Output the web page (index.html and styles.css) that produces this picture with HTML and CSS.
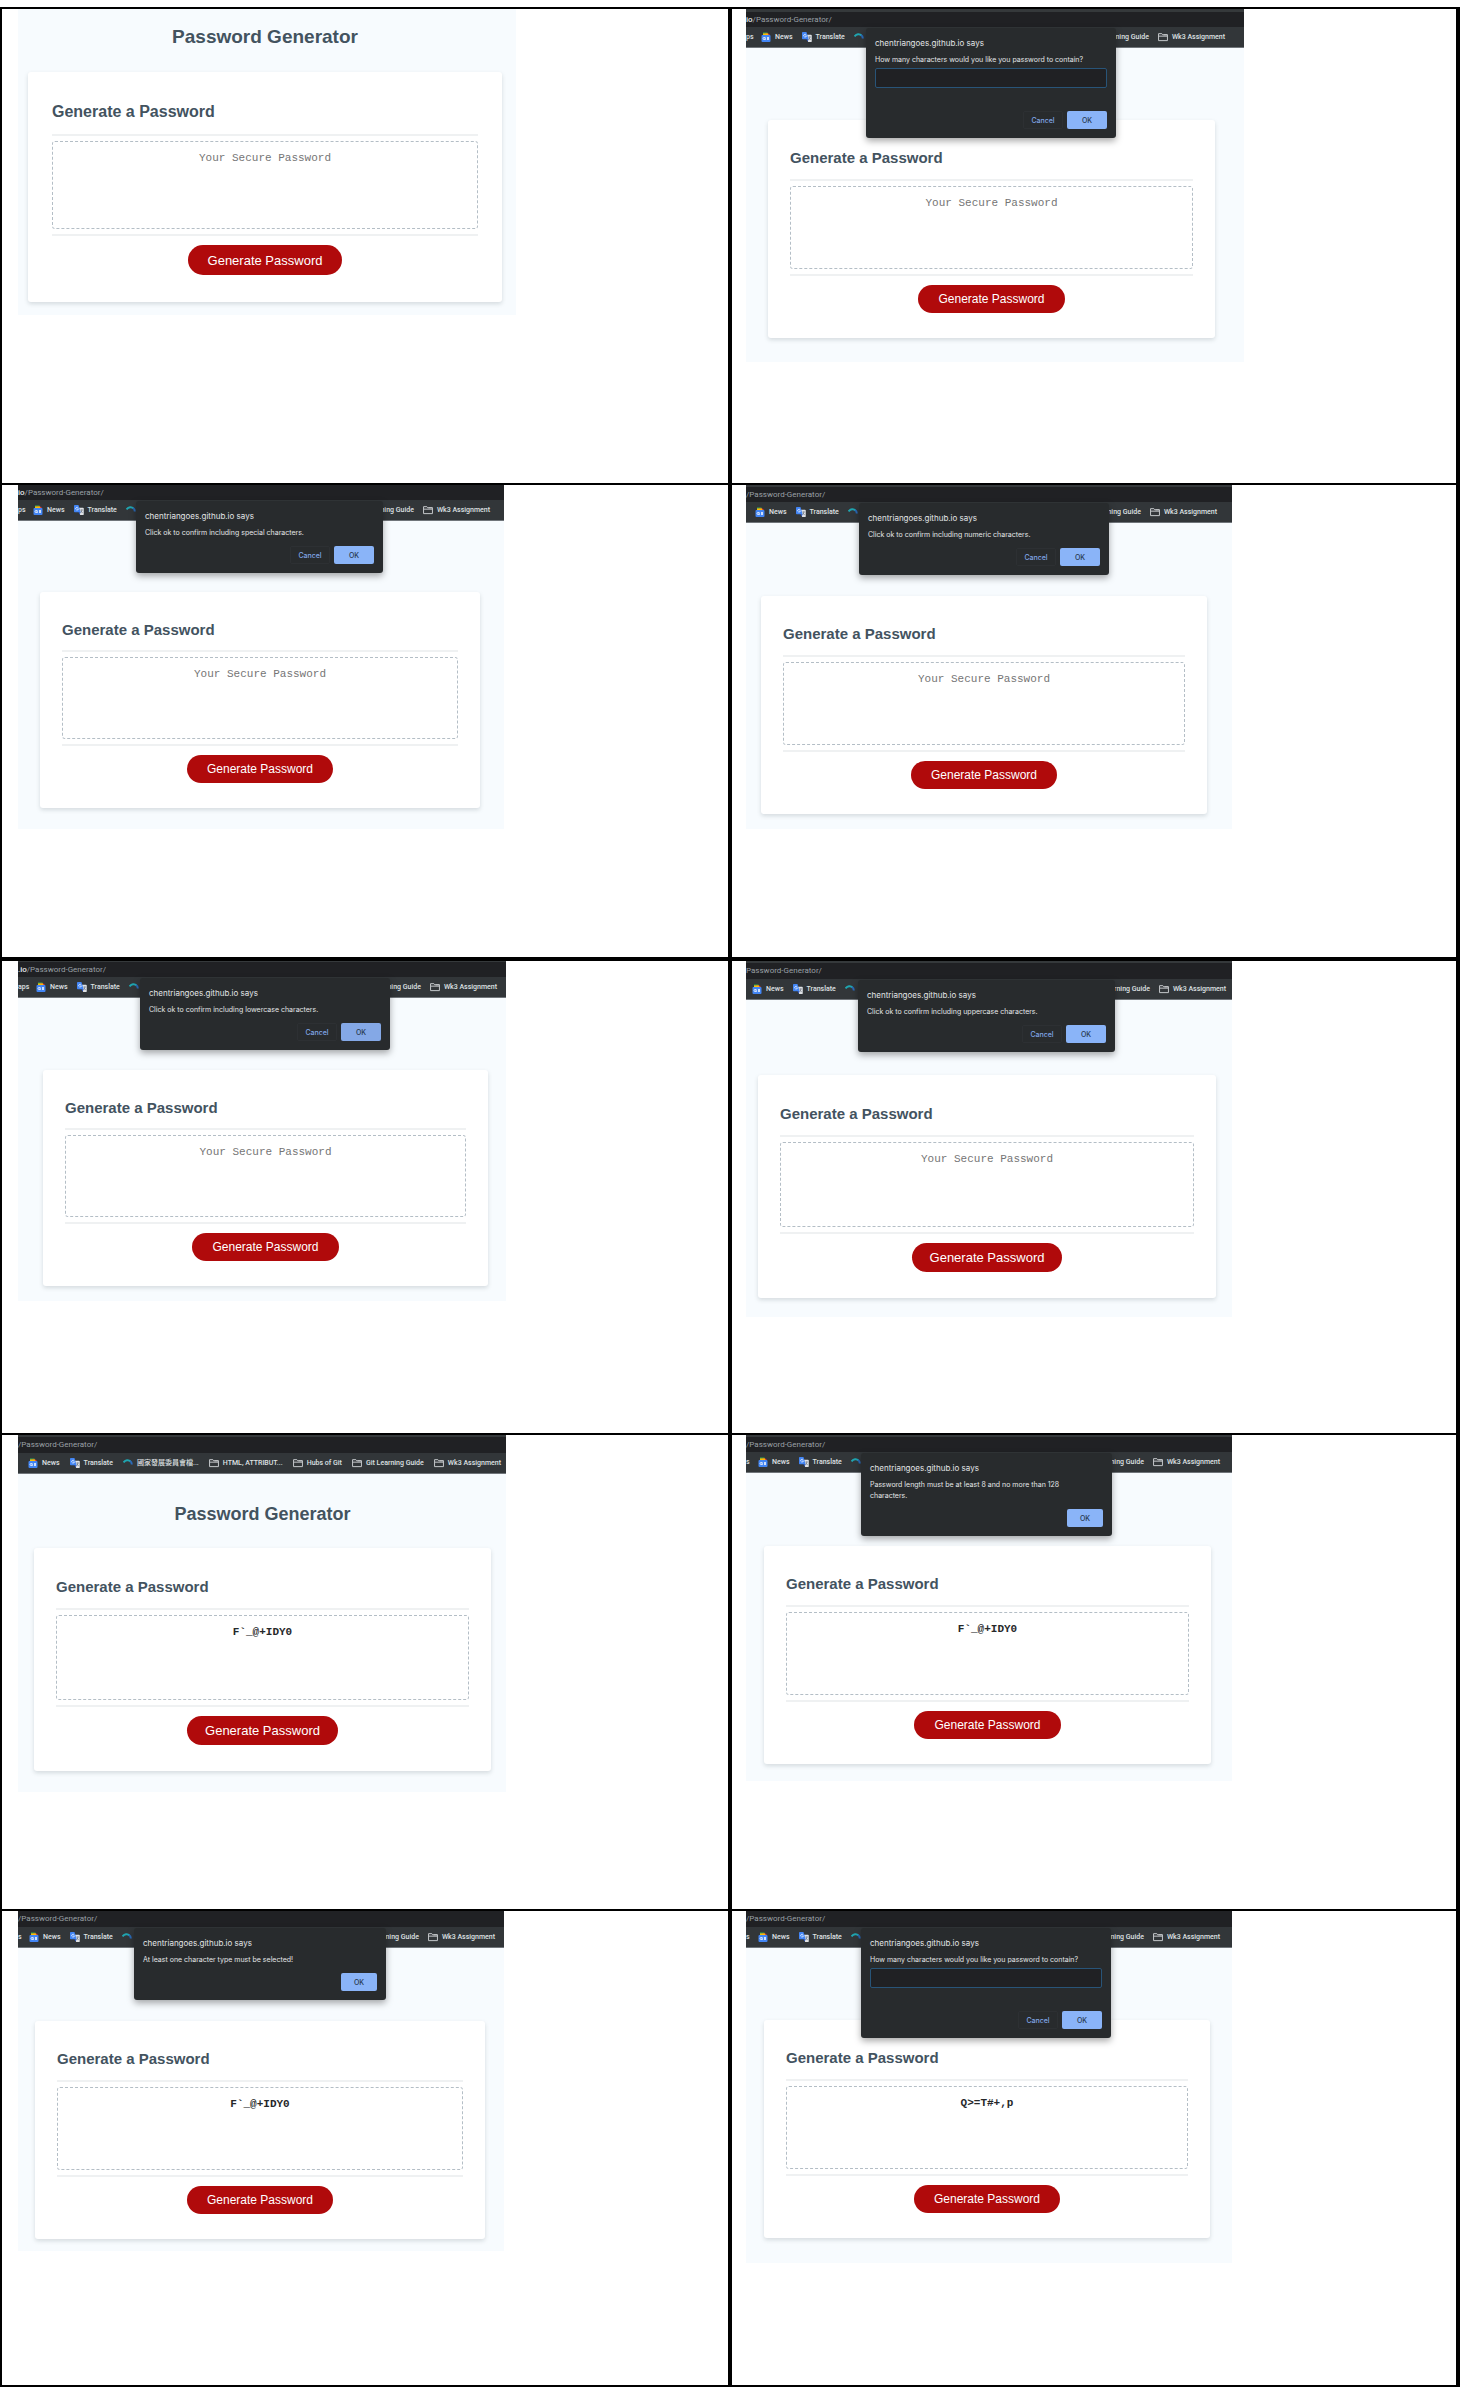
FILE: index.html
```html
<!DOCTYPE html>
<html lang="en">
<head>
<meta charset="utf-8">
<title>Password Generator</title>
<link rel="stylesheet" href="styles.css">
</head>
<body>
<svg class="sprite" aria-hidden="true">
  <symbol id="news" viewBox="0 0 18 20">
    <path fill="#34a853" d="M3 1h9v6H3z"/><path fill="#ea4335" d="M8 2l8 2-1 5H7z"/><path fill="#fbbc04" d="M3 3h10v5H3z"/>
    <rect y="6" width="18" height="14" rx="2" fill="#4285f4"/>
    <path fill="none" stroke="#fff" stroke-width="1.5" d="M8 11H5a2 2 0 0 0 0 4h3v-2H6M11 11h4M11 13h4M11 15h4"/>
  </symbol>
  <symbol id="translate" viewBox="0 0 18 18">
    <path fill="#e0e3e6" d="M8 5h8a1.500 1.500 0 0 1 1.500 1.500v10A1.500 1.500 0 0 1 16 18h-5z"/>
    <path fill="#4285f4" d="M1.500 0H8l4 13H1.500A1.500 1.500 0 0 1 0 11.500v-10A1.500 1.500 0 0 1 1.500 0z"/>
    <path fill="#2a56c6" d="M8 13h4l-2 4z"/>
    <path fill="none" stroke="#fff" stroke-width="1.200" d="M7.500 5a2.500 2.500 0 1 0 .5 2H6"/>
    <path fill="none" stroke="#6b7280" stroke-width="1.200" d="M11.500 9H16M14 8v1c0 2-1 4-2 5M12.500 10.500l3 4"/>
  </symbol>
  <symbol id="swirl" viewBox="0 0 20 18">
    <path fill="none" stroke="#1fa5b0" stroke-width="4" d="M1 8c4-5 10-6 14-2"/>
    <path fill="none" stroke="#2a6ab8" stroke-width="4" d="M14 5c3 2 4 4 3 7"/>
  </symbol>
  <symbol id="folder" viewBox="0 0 18 18">
    <path fill="none" stroke="#c3c6c9" stroke-width="1.800" d="M1 15.500V3h6l1.500 2H17v10.500zM1 7.500h16M10 5h7"/>
  </symbol>
</svg>

<main class="sheet">

  <section class="cell row-1">
    <div class="shot shot-1">
      <div class="page">
        <h1 class="title">Password Generator</h1>
        <div class="card card-xl">
          <h2 class="card-title">Generate a Password</h2>
          <textarea class="field" aria-label="Password" placeholder="Your Secure Password" readonly></textarea>
          <div class="card-foot"><button class="generate">Generate Password</button></div>
        </div>
      </div>
    </div>
  </section>

  <section class="cell row-1">
    <div class="shot shot-2">
      <div class="url"><b>io</b>/Password-Generator/</div>
      <nav class="marks">
        <span class="lead">ps</span>
        <a href="#"><svg><use href="#news"/></svg>News</a>
        <a href="#"><svg><use href="#translate"/></svg>Translate</a>
        <a href="#" aria-label="Council"><svg><use href="#swirl"/></svg></a>
        <a class="far" href="#"><svg><use href="#folder"/></svg>Git Learning Guide</a>
        <a href="#"><svg><use href="#folder"/></svg>Wk3 Assignment</a>
      </nav>
      <div class="page">
        <div class="dialog" role="dialog">
          <p class="origin">chentriangoes.github.io says</p>
          <label class="message" for="count-1">How many characters would you like you password to contain?</label>
          <input class="prompt" id="count-1" type="text">
          <div class="actions"><button class="cancel">Cancel</button><button class="ok">OK</button></div>
        </div>
        <div class="card">
          <h2 class="card-title">Generate a Password</h2>
          <textarea class="field" aria-label="Password" placeholder="Your Secure Password" readonly></textarea>
          <div class="card-foot"><button class="generate">Generate Password</button></div>
        </div>
      </div>
    </div>
  </section>

  <section class="cell row-2">
    <div class="shot shot-3">
      <div class="url"><b>io</b>/Password-Generator/</div>
      <nav class="marks">
        <span class="lead">ps</span>
        <a href="#"><svg><use href="#news"/></svg>News</a>
        <a href="#"><svg><use href="#translate"/></svg>Translate</a>
        <a href="#" aria-label="Council"><svg><use href="#swirl"/></svg></a>
        <a class="far" href="#"><svg><use href="#folder"/></svg>Git Learning Guide</a>
        <a href="#"><svg><use href="#folder"/></svg>Wk3 Assignment</a>
      </nav>
      <div class="page">
        <div class="dialog" role="dialog">
          <p class="origin">chentriangoes.github.io says</p>
          <p class="message">Click ok to confirm including special characters.</p>
          <div class="actions"><button class="cancel">Cancel</button><button class="ok">OK</button></div>
        </div>
        <div class="card card-sm">
          <h2 class="card-title">Generate a Password</h2>
          <textarea class="field" aria-label="Password" placeholder="Your Secure Password" readonly></textarea>
          <div class="card-foot"><button class="generate">Generate Password</button></div>
        </div>
      </div>
    </div>
  </section>

  <section class="cell row-2">
    <div class="shot shot-4">
      <div class="url">/Password-Generator/</div>
      <nav class="marks">
        <span class="lead"></span>
        <a href="#"><svg><use href="#news"/></svg>News</a>
        <a href="#"><svg><use href="#translate"/></svg>Translate</a>
        <a href="#" aria-label="Council"><svg><use href="#swirl"/></svg></a>
        <a class="far" href="#"><svg><use href="#folder"/></svg>Git Learning Guide</a>
        <a href="#"><svg><use href="#folder"/></svg>Wk3 Assignment</a>
      </nav>
      <div class="page">
        <div class="dialog" role="dialog">
          <p class="origin">chentriangoes.github.io says</p>
          <p class="message">Click ok to confirm including numeric characters.</p>
          <div class="actions"><button class="cancel">Cancel</button><button class="ok">OK</button></div>
        </div>
        <div class="card">
          <h2 class="card-title">Generate a Password</h2>
          <textarea class="field" aria-label="Password" placeholder="Your Secure Password" readonly></textarea>
          <div class="card-foot"><button class="generate">Generate Password</button></div>
        </div>
      </div>
    </div>
  </section>

  <section class="cell row-3">
    <div class="shot shot-5">
      <div class="url"><b>.io</b>/Password-Generator/</div>
      <nav class="marks">
        <span class="lead">aps</span>
        <a href="#"><svg><use href="#news"/></svg>News</a>
        <a href="#"><svg><use href="#translate"/></svg>Translate</a>
        <a href="#" aria-label="Council"><svg><use href="#swirl"/></svg></a>
        <a class="far" href="#"><svg><use href="#folder"/></svg>Git Learning Guide</a>
        <a href="#"><svg><use href="#folder"/></svg>Wk3 Assignment</a>
      </nav>
      <div class="page">
        <div class="dialog" role="dialog">
          <p class="origin">chentriangoes.github.io says</p>
          <p class="message">Click ok to confirm including lowercase characters.</p>
          <div class="actions"><button class="cancel">Cancel</button><button class="ok ok-pressed">OK</button></div>
        </div>
        <div class="card card-sm">
          <h2 class="card-title">Generate a Password</h2>
          <textarea class="field" aria-label="Password" placeholder="Your Secure Password" readonly></textarea>
          <div class="card-foot"><button class="generate">Generate Password</button></div>
        </div>
      </div>
    </div>
  </section>

  <section class="cell row-3">
    <div class="shot shot-6">
      <div class="url">Password-Generator/</div>
      <nav class="marks">
        <span class="lead"></span>
        <a href="#"><svg><use href="#news"/></svg>News</a>
        <a href="#"><svg><use href="#translate"/></svg>Translate</a>
        <a href="#" aria-label="Council"><svg><use href="#swirl"/></svg></a>
        <a class="far" href="#"><svg><use href="#folder"/></svg>Git Learning Guide</a>
        <a href="#"><svg><use href="#folder"/></svg>Wk3 Assignment</a>
      </nav>
      <div class="page">
        <div class="dialog" role="dialog">
          <p class="origin">chentriangoes.github.io says</p>
          <p class="message">Click ok to confirm including uppercase characters.</p>
          <div class="actions"><button class="cancel">Cancel</button><button class="ok">OK</button></div>
        </div>
        <div class="card card-lg">
          <h2 class="card-title">Generate a Password</h2>
          <textarea class="field" aria-label="Password" placeholder="Your Secure Password" readonly></textarea>
          <div class="card-foot"><button class="generate">Generate Password</button></div>
        </div>
      </div>
    </div>
  </section>

  <section class="cell row-4">
    <div class="shot shot-7">
      <div class="url">/Password-Generator/</div>
      <nav class="marks marks-full">
        <span class="lead"></span>
        <a href="#"><svg><use href="#news"/></svg>News</a>
        <a href="#"><svg><use href="#translate"/></svg>Translate</a>
        <a href="#"><svg><use href="#swirl"/></svg>國家發展委員會檔...</a>
        <a href="#"><svg><use href="#folder"/></svg>HTML, ATTRIBUT...</a>
        <a href="#"><svg><use href="#folder"/></svg>Hubs of Git</a>
        <a href="#"><svg><use href="#folder"/></svg>Git Learning Guide</a>
        <a href="#"><svg><use href="#folder"/></svg>Wk3 Assignment</a>
      </nav>
      <div class="page">
        <h1 class="title">Password Generator</h1>
        <div class="card card-lg">
          <h2 class="card-title">Generate a Password</h2>
          <textarea class="field" aria-label="Password" readonly>F`_@+IDY0</textarea>
          <div class="card-foot"><button class="generate">Generate Password</button></div>
        </div>
      </div>
    </div>
  </section>

  <section class="cell row-4">
    <div class="shot shot-8">
      <div class="url">/Password-Generator/</div>
      <nav class="marks">
        <span class="lead">s</span>
        <a href="#"><svg><use href="#news"/></svg>News</a>
        <a href="#"><svg><use href="#translate"/></svg>Translate</a>
        <a href="#" aria-label="Council"><svg><use href="#swirl"/></svg></a>
        <a class="far" href="#"><svg><use href="#folder"/></svg>Git Learning Guide</a>
        <a href="#"><svg><use href="#folder"/></svg>Wk3 Assignment</a>
      </nav>
      <div class="page">
        <div class="dialog dialog-alert" role="dialog">
          <p class="origin">chentriangoes.github.io says</p>
          <p class="message">Password length must be at least 8 and no more than 128 characters.</p>
          <div class="actions"><button class="ok">OK</button></div>
        </div>
        <div class="card">
          <h2 class="card-title">Generate a Password</h2>
          <textarea class="field" aria-label="Password" readonly>F`_@+IDY0</textarea>
          <div class="card-foot"><button class="generate">Generate Password</button></div>
        </div>
      </div>
    </div>
  </section>

  <section class="cell row-5">
    <div class="shot shot-9">
      <div class="url">/Password-Generator/</div>
      <nav class="marks">
        <span class="lead">s</span>
        <a href="#"><svg><use href="#news"/></svg>News</a>
        <a href="#"><svg><use href="#translate"/></svg>Translate</a>
        <a href="#" aria-label="Council"><svg><use href="#swirl"/></svg></a>
        <a class="far" href="#"><svg><use href="#folder"/></svg>Git Learning Guide</a>
        <a href="#"><svg><use href="#folder"/></svg>Wk3 Assignment</a>
      </nav>
      <div class="page">
        <div class="dialog dialog-alert" role="dialog">
          <p class="origin">chentriangoes.github.io says</p>
          <p class="message">At least one character type must be selected!</p>
          <div class="actions"><button class="ok">OK</button></div>
        </div>
        <div class="card">
          <h2 class="card-title">Generate a Password</h2>
          <textarea class="field" aria-label="Password" readonly>F`_@+IDY0</textarea>
          <div class="card-foot"><button class="generate">Generate Password</button></div>
        </div>
      </div>
    </div>
  </section>

  <section class="cell row-5">
    <div class="shot shot-10">
      <div class="url">/Password-Generator/</div>
      <nav class="marks">
        <span class="lead">s</span>
        <a href="#"><svg><use href="#news"/></svg>News</a>
        <a href="#"><svg><use href="#translate"/></svg>Translate</a>
        <a href="#" aria-label="Council"><svg><use href="#swirl"/></svg></a>
        <a class="far" href="#"><svg><use href="#folder"/></svg>Git Learning Guide</a>
        <a href="#"><svg><use href="#folder"/></svg>Wk3 Assignment</a>
      </nav>
      <div class="page">
        <div class="dialog" role="dialog">
          <p class="origin">chentriangoes.github.io says</p>
          <label class="message" for="count-2">How many characters would you like you password to contain?</label>
          <input class="prompt" id="count-2" type="text">
          <div class="actions"><button class="cancel">Cancel</button><button class="ok">OK</button></div>
        </div>
        <div class="card">
          <h2 class="card-title">Generate a Password</h2>
          <textarea class="field" aria-label="Password" readonly>Q&gt;=T#+,p</textarea>
          <div class="card-foot"><button class="generate">Generate Password</button></div>
        </div>
      </div>
    </div>
  </section>

</main>
</body>
</html>
```
FILE: styles.css
```css
* { box-sizing: border-box; }

body {
  margin: 0;
  padding: 7px 6px 7px 0;
  background: #fff;
  font-family: "Liberation Sans", Arial, sans-serif;
}

p, h1, h2 { margin: 0; }

button { font: inherit; padding: 0; border: 0; }

.sprite { display: none; }

/* Sheet: two ruled columns of captures */
.sheet {
  display: grid;
  grid-template-columns: 1fr 1fr;
  border-bottom: 2px solid #000;
}

.cell {
  min-width: 0;
  min-height: 476px;
  padding-left: 16px;
  border: solid #000;
  border-width: 2px 2px 0;
}

.cell:nth-child(even) { padding-left: 14px; border-right-width: 4px; }
.row-2 { min-height: 474px; }
.row-3 { border-top-width: 4px; }

.shot {
  --strip: 0px;
  --bar: 15px;
  --lead: 12px;
  --trail: 12px;
  --page: 72px 22px 24px;
  --dialog: 250px;
  --dialog-x: 115px;
  width: 486px;
  max-width: 100%;
  overflow: hidden;
}

.shot-1 { --page: 15px 14px 13px 10px; width: 498px; }
.shot-2 { --strip: 3px; --lead: 15px; --trail: 19px; --page: 72px 29px 24px 22px; --dialog-x: 120px; width: 498px; }
.shot-3 { --lead: 15px; --trail: 14px; --page: 71px 24px 21px 22px; --dialog: 247px; --dialog-x: 118px; }
.shot-4 { --strip: 2px; --lead: 9px; --trail: 15px; --page: 73px 25px 15px 15px; --dialog-x: 113px; }
.shot-5 { --strip: 1px; --lead: 18px; --trail: 9px; --page: 72px 18px 15px 25px; --dialog-x: 122px; width: 488px; }
.shot-6 { --strip: 2px; --bar: 16px; --lead: 6px; --trail: 6px; --page: 75px 16px 19px 12px; --dialog: 257px; --dialog-x: 112px; }
.shot-7 { --strip: 2px; --bar: 16px; --lead: 9px; --trail: 5px; --page: 27px 15px 21px 16px; width: 488px; }
.shot-8 { --strip: 2px; --page: 73px 21px 17px 18px; --dialog: 251px; }
.shot-9 { --bar: 16px; --lead: 11px; --trail: 9px; --page: 73px 19px 12px 17px; --dialog: 252px; --dialog-x: 116px; }
.shot-10 { --bar: 16px; --page: 72px 22px 25px 18px; }

/* Browser chrome */
.url {
  height: calc(var(--bar) + var(--strip));
  border-top: var(--strip) solid #35393b;
  background: #202124;
  color: #9aa0a6;
  font: 8px/15px Roboto, sans-serif;
  white-space: nowrap;
}

.url b { color: #e8eaed; font-weight: 500; }

.marks {
  display: flex;
  align-items: center;
  gap: 9px;
  height: 21px;
  padding-right: var(--trail);
  border-bottom: 1px solid #70757a;
  background: #323639;
  color: #dfe1e3;
  font: 500 7px/12px Roboto, "Noto Sans CJK TC", sans-serif;
  white-space: nowrap;
}

.marks a {
  display: flex;
  flex: none;
  align-items: center;
  gap: 4px;
  color: inherit;
  text-decoration: none;
}

.marks svg { width: 10px; height: 10px; }
.marks .far { margin-left: auto; }
.lead { flex: none; width: var(--lead); margin-right: -9px; overflow: hidden; }
.marks-full { justify-content: space-between; gap: 0; }

/* Generator page */
.page {
  position: relative;
  padding: var(--page);
  background: #f7fbfe;
}

.title {
  padding-bottom: 21px;
  color: #43535f;
  font-size: 18px;
  line-height: 26px;
  text-align: center;
}

.shot-1 .title { padding-bottom: 22px; font-size: 19px; }

.card {
  --side: 22px;
  --above: 28px;
  --below: 11px;
  --field: 83px;
  --button: 28px;
  --end: 25px;
  padding: 0 var(--side) var(--end);
  border-radius: 3px;
  background: #fff;
  box-shadow: 0 2px 4px rgba(60, 75, 85, 0.18);
}

.card-sm { --below: 10px; --field: 82px; }
.card-lg { --above: 29px; --field: 85px; --button: 29px; --end: 26px; }
.card-xl { --side: 24px; --above: 30px; --below: 12px; --field: 88px; --button: 30px; --end: 27px; }

.card-title {
  padding: var(--above) 0 var(--below);
  border-bottom: 2px solid #eff1f2;
  color: #43535f;
  font-size: 15px;
  line-height: 20px;
}

.card-xl .card-title { font-size: 16px; }

.field {
  display: block;
  width: 100%;
  height: var(--field);
  margin: 5px 0;
  padding: 9px;
  border: 1px dashed #b4bec6;
  border-radius: 3px;
  outline: 0;
  background: #fff;
  color: #26282a;
  font: bold 11px/14px "Liberation Mono", monospace;
  text-align: center;
  resize: none;
  overflow: hidden;
}

.field::placeholder { color: #757575; font-weight: 400; opacity: 1; }

.card-foot {
  display: flex;
  justify-content: center;
  padding-top: 9px;
  border-top: 2px solid #eff1f2;
}

.generate {
  height: var(--button);
  padding: 0 20px;
  border-radius: 15px;
  background: #b00a0b;
  color: #fff;
  font-size: 12px;
}

.card-lg .generate { padding: 0 18px; font-size: 13px; }
.card-xl .generate { padding: 0 20px; font-size: 13px; }

/* Script dialog, hung from the address bar over the page */
.dialog {
  position: absolute;
  top: -20px;
  left: var(--dialog-x);
  width: var(--dialog);
  padding: 9px;
  border-radius: 3px;
  background: #282b2d;
  box-shadow: 0 3px 7px rgba(0, 0, 0, 0.35);
  color: #e3e5e7;
  font: 7px/11px Inter, sans-serif;
}

.origin { font-size: 8px; line-height: 12px; }
.message { display: block; padding: 5px 12px 0 0; }

.prompt {
  display: block;
  width: 100%;
  height: 20px;
  margin: 3px 0 23px;
  border: 1px solid #285478;
  border-radius: 2px;
  outline: 0;
  background: #202124;
  color: #e3e5e7;
}

.actions {
  display: flex;
  justify-content: flex-end;
  gap: 4px;
  padding-top: 8px;
  font-weight: 500;
}

.prompt + .actions { padding-top: 0; }
.actions button { width: 40px; height: 18px; border-radius: 2px; }
.cancel { border: 1px solid #2d3033; background: transparent; color: #80a6e6; }
.ok { background: #8ab4f8; color: #28384f; }
.ok-pressed { background: #84a8e6; }
.actions > .ok:only-child { width: 36px; }
```
